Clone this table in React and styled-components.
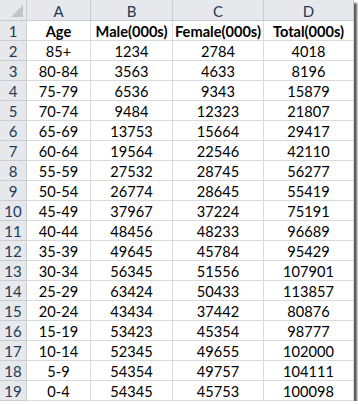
import React from "react";
import styled, { createGlobalStyle } from "styled-components";

const rows = [
  ["Age", "Male(000s)", "Female(000s)", "Total(000s)"],
  ["85+", 1234, 2784, 4018],
  ["80-84", 3563, 4633, 8196],
  ["75-79", 6536, 9343, 15879],
  ["70-74", 9484, 12323, 21807],
  ["65-69", 13753, 15664, 29417],
  ["60-64", 19564, 22546, 42110],
  ["55-59", 27532, 28745, 56277],
  ["50-54", 26774, 28645, 55419],
  ["45-49", 37967, 37224, 75191],
  ["40-44", 48456, 48233, 96689],
  ["35-39", 49645, 45784, 95429],
  ["30-34", 56345, 51556, 107901],
  ["25-29", 63424, 50433, 113857],
  ["20-24", 43434, 37442, 80876],
  ["15-19", 53423, 45354, 98777],
  ["10-14", 52345, 49655, 102000],
  ["5-9", 54354, 49757, 104111],
  ["0-4", 54345, 45753, 100098],
];

const letters = ["A", "B", "C", "D"];

const Global = createGlobalStyle`
  body {
    margin: 0;
    background: #ffffff;
  }
`;

const Sheet = styled.div`
  display: grid;
  grid-template-columns: 27px 64px 82px 91px 90px;
  grid-auto-rows: 20px;
  grid-template-rows: 21px;
  width: 354px;
  box-shadow: 3px 3px 2px rgba(50, 50, 50, 0.8);
  font-family: Lato, "Liberation Sans", sans-serif;
  font-size: 14.6px;
  color: #000;
`;

const Head = styled.div`
  box-sizing: border-box;
  display: flex;
  align-items: center;
  justify-content: center;
  background: #e6e8eb;
  border-right: 1px solid #c9cdd2;
  border-bottom: 1px solid #c9cdd2;
  color: #213a58;
  font-size: 15px;
  padding-top: 1px;
`;

const Corner = styled(Head)`
  justify-content: flex-end;
  align-items: flex-end;
  padding: 0 3px 3px 0;
`;

const Cell = styled.div`
  box-sizing: border-box;
  display: flex;
  align-items: center;
  justify-content: center;
  background: #fff;
  border-right: 1px solid #d9dadb;
  border-bottom: 1px solid #d9dadb;
  font-weight: ${(p) => (p.$bold ? 700 : 400)};
  white-space: nowrap;
  padding-top: 1px;
`;

export default function App() {
  return (
    <>
      <Global />
      <Sheet>
        <Corner>
          <svg width="12" height="12" viewBox="0 0 12 12">
            <polygon points="12,0 12,12 0,12" fill="#c2c4c7" />
          </svg>
        </Corner>
        {letters.map((l) => (
          <Head key={l}>{l}</Head>
        ))}
        {rows.map((r, i) => (
          <React.Fragment key={i}>
            <Head>{i + 1}</Head>
            {r.map((v, j) => (
              <Cell key={j} $bold={i === 0}>
                {v}
              </Cell>
            ))}
          </React.Fragment>
        ))}
      </Sheet>
    </>
  );
}
